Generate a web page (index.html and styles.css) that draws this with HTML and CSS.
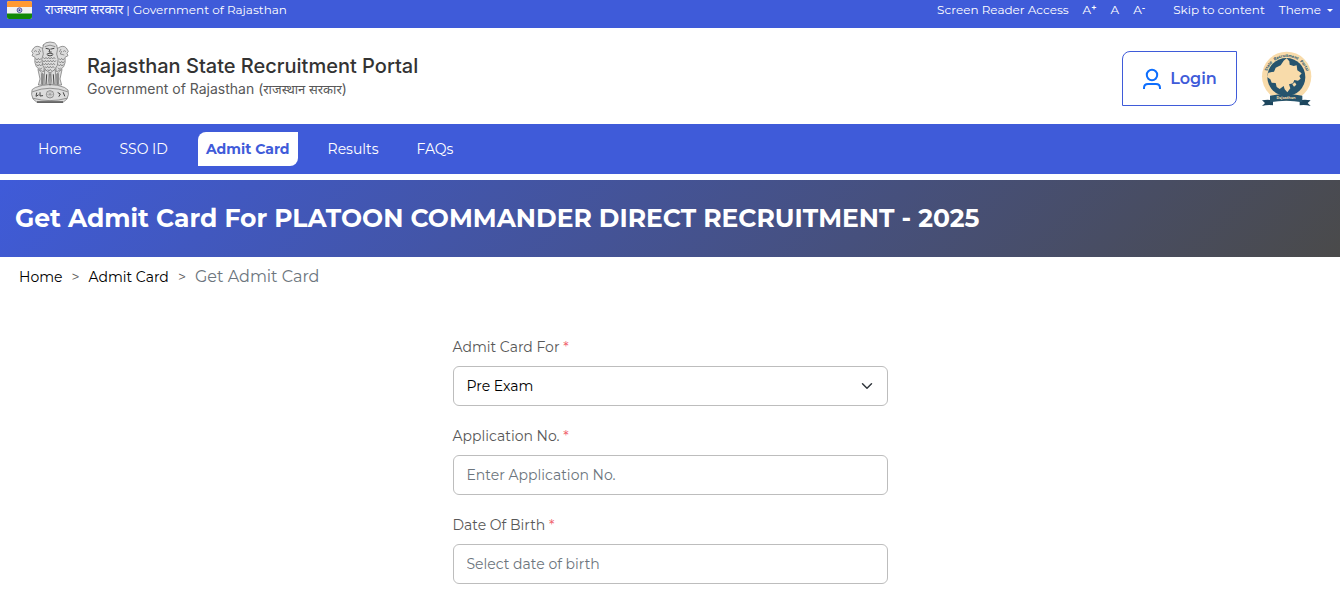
FILE: index.html
```html
<!DOCTYPE html>
<html lang="en">
    <head>
        <meta charset="utf-8">
        <meta name="viewport" content="width=device-width, initial-scale=1">
        <title>Rajasthan State Recruitment Portal</title>
        <link rel="stylesheet" href="styles.css">
    </head>
    <body>

        <!-- Top bar -->
        <div class="topbar">
            <div class="topbar-gov">
                <svg class="flag" viewBox="0 0 25 18" aria-hidden="true">
                    <rect width="25" height="18" rx="2" fill="#f2f2f2"/>
                    <path d="M0 6V2q0-2 2-2h21q2 0 2 2v4z" fill="#ff9933"/>
                    <path d="M0 12.500v3.500q0 2 2 2h21q2 0 2-2v-3.500z" fill="#138808"/>
                    <circle cx="12.500" cy="9.200" r="2.400" fill="#c5c5e4" stroke="#35358f" stroke-width=".8"/>
                    <circle cx="12.500" cy="9.200" r=".9" fill="#35358f"/>
                </svg>
                <span><span class="hindi" lang="hi">राजस्थान सरकार</span> | Government of Rajasthan</span>
            </div>
            <div class="topbar-tools">
                <a href="#reader">Screen Reader Access</a>
                <div class="font-size">
                    <button type="button">A<sup>+</sup></button>
                    <button type="button">A</button>
                    <button type="button">A<sup>-</sup></button>
                </div>
                <a href="#content">Skip to content</a>
                <button type="button" class="theme">Theme <span class="caret"></span></button>
            </div>
        </div>

        <!-- Header -->
        <header class="header">
            <a class="brand" href="#home">
                <svg class="emblem" viewBox="27 18 126 189" aria-hidden="true">
                    <g fill="#dcdcdc" stroke="#6a6a6a" stroke-width="2" stroke-linejoin="round" stroke-linecap="round">
                        <!-- legs -->
                        <path d="M54 104l6 28-5 18h14l2-32zM126 104l-6 28 5 18h-14l-2-32z"/>
                        <path d="M74 105l-2 47h12l4-42zM106 105l2 47H96l-4-42z"/>
                        <!-- side lions -->
                        <path d="M64 38q-14-9-23 1l-6 10 4 6-3 7 9 5q-3 16 4 28 9 11 22 16l9-66z"/>
                        <path d="M116 38q14-9 23 1l6 10-4 6 3 7-9 5q3 16-4 28-9 11-22 16l-9-66z"/>
                        <!-- front lion -->
                        <path d="M70 30q4-9 20-9t20 9q5 13 0 27 8 14 2 34-7 16-22 23-15-7-22-23-6-20 2-34-5-14 0-27z"/>
                        <!-- base -->
                        <path d="M47 157q43-17 86 0l11 8q4 13-3 27l-12 10H51l-12-10q-7-14-3-27z"/>
                        <path d="M38 170q52-21 104 0M40 190q50 14 100 0" fill="none"/>
                    </g>
                    <g class="mane">
                        <path d="M70 67l4 5 4-5 4 5 4-5 4 5 4-5 4 5 4-5 4 5M68 76l4 5 4-5 4 5 4-5 4 5 4-5 4 5 4-5 4 5 4-5M69 85l4 5 4-5 4 5 4-5 4 5 4-5 4 5 4-5 4 5M75 94l4 5 4-5 4 5 4-5 4 5 4-5 4 5M83 103l4 5 4-5 4 5"/>
                        <path d="M47 70l4 5 4-5 4 5 4-5M47 79l4 5 4-5 4 5 4-5M50 88l4 5 4-5 4 5 4-5M58 98l4 5 4-5M133 70l-4 5-4-5-4 5-4-5M133 79l-4 5-4-5-4 5-4-5M130 88l-4 5-4-5-4 5-4-5M122 98l-4 5-4-5"/>
                        <path d="M42 50q5-6 9 0M47 60l12-3-4-9M138 50q-5-6-9 0M133 60l-12-3 4-9M74 35q16-9 32 0M57 42l5 9M123 42l-5 9"/>
                    </g>
                    <g fill="none" stroke="#444" stroke-width="3" stroke-linecap="round">
                        <path d="M78 40l8 2M102 40l-8 2M90 42l-3 9h7M81 57q9-6 18 0M83 61q7 4 14 0"/>
                        <path d="M66 116v31M80 119l-2 28M100 119l2 28M114 116v31M90 117v33"/>
                        <path d="M50 174l-2 10 7-4M60 173v10l8-1M114 173l7 4-4 7M130 173l4 10"/>
                    </g>
                    <circle cx="90" cy="178" r="11" fill="#e4e4e4" stroke="#666" stroke-width="2"/>
                    <path d="M90 167v22M79 178h22M82 170l16 16M98 170l-16 16" stroke="#999" stroke-width="2"/>
                    <path d="M51 201h78" stroke="#444" stroke-width="4"/>
                </svg>
                <span class="brand-text">
                    <span class="brand-name">Rajasthan State Recruitment Portal</span>
                    <span class="brand-sub">Government of Rajasthan (<span class="hindi" lang="hi">राजस्थान सरकार</span>)</span>
                </span>
            </a>
            <div class="header-side">
                <button type="button" class="login">
                    <svg class="user-icon" viewBox="0 0 20 22" aria-hidden="true">
                        <circle cx="10" cy="7" r="5.200"/>
                        <path d="M2 21v-1q0-4 4-4h8q4 0 4 4v1"/>
                    </svg>
                    Login
                </button>
                <svg class="portal-logo" viewBox="33 33 153 168" aria-hidden="true">
                    <defs>
                        <path id="logo-arc" d="M49 124A62 62 0 1 1 171 124"/>
                    </defs>
                    <circle cx="110" cy="109" r="74" fill="#f8dbaa"/>
                    <circle cx="109" cy="111" r="57" fill="#26546d"/>
                    <path d="M110 55l8 9 1 10 12 4 9-2 2 15 13 9-7 8 4 8-8 6-11-2-4 10-12 3 4 12-9 12-8-9-3-10-12 9-9-6-3-12-12-1-4-10-10-7 4-13 17-3 5-12 15-7 9-14z" fill="#f8dbaa"/>
                    <path d="M127 133l8-6 4 7-7 6z" fill="#f8dbaa"/>
                    <text class="logo-text" text-anchor="middle"><textPath href="#logo-arc" startOffset="50%">State &#160; Recruitment &#160; Portal</textPath></text>
                    <path d="M36 181q18-3 33 0v15q-17-2-33 2l9-9zM182 181q-18-3-33 0v15q17-2 33 2l-9-9z" fill="#1d465d"/>
                    <path d="M60 167q48-10 97 0v20q-48-10-97 0z" fill="#26546d"/>
                    <text class="logo-ribbon" x="108" y="176" text-anchor="middle">Rajasthan</text>
                </svg>
            </div>
        </header>

        <!-- Navigation -->
        <nav class="nav">
            <a href="#home">Home</a>
            <a href="#sso">SSO ID</a>
            <a href="#admit-card" class="active">Admit Card</a>
            <a href="#results">Results</a>
            <a href="#faqs">FAQs</a>
        </nav>

        <main id="content">
            <div class="banner">
                <h1>Get Admit Card For PLATOON COMMANDER DIRECT RECRUITMENT - 2025</h1>
            </div>

            <div class="breadcrumb">
                <a href="#home">Home</a>
                <span class="sep">&gt;</span>
                <a href="#admit-card">Admit Card</a>
                <span class="sep">&gt;</span>
                <span class="current">Get Admit Card</span>
            </div>

            <form class="form">
                <div class="field">
                    <label for="exam">Admit Card For <span class="required">*</span></label>
                    <select id="exam">
                        <option>Pre Exam</option>
                    </select>
                </div>
                <div class="field">
                    <label for="application">Application No. <span class="required">*</span></label>
                    <input type="text" id="application" placeholder="Enter Application No.">
                </div>
                <div class="field">
                    <label for="dob">Date Of Birth <span class="required">*</span></label>
                    <input type="text" id="dob" placeholder="Select date of birth">
                </div>
            </form>
        </main>

    </body>
</html>
```
FILE: styles.css
```css
* {
    box-sizing: border-box;
}

body {
    margin: 0;
    background: #fff;
    color: #585858;
    font-family: Montserrat, Inter, "Noto Sans", sans-serif;
    font-size: 14px;
    line-height: 20px;
}

a {
    color: inherit;
    text-decoration: none;
}

button,
input,
select {
    font: inherit;
}

.hindi {
    font-size: 13px;
    line-height: 1;
}

/* Top bar */

.topbar {
    display: flex;
    justify-content: space-between;
    min-height: 28px;
    padding: 0 7px 8px;
    background: #3f5bd9;
    color: #fff;
    font-size: 12px;
}

.topbar-gov,
.topbar-tools,
.font-size {
    display: flex;
    align-items: center;
}

.topbar-gov {
    gap: 13px;
}

.topbar-tools {
    gap: 14px;
}

.flag {
    width: 25px;
    height: 18px;
}

.font-size {
    gap: 14px;
    margin-right: 14px;
}

.topbar button {
    padding: 0;
    border: 0;
    background: none;
    color: inherit;
}

.topbar sup {
    font-size: 9px;
    font-weight: 600;
    line-height: 0;
    vertical-align: 3px;
}

.topbar .theme {
    display: flex;
    align-items: center;
    gap: 6px;
}

.caret {
    border-top: 3px solid #fff;
    border-left: 3px solid transparent;
    border-right: 3px solid transparent;
}

/* Header */

.header {
    display: flex;
    justify-content: space-between;
    align-items: center;
    min-height: 96px;
    padding: 8px 28px 8px 29px;
}

.brand {
    display: flex;
    align-items: center;
    gap: 16px;
}

.emblem {
    width: 42px;
    height: 63px;
    margin-bottom: 8px;
}

.mane {
    fill: none;
    stroke: #6a6a6a;
    stroke-width: 2;
}

.brand-text {
    display: flex;
    flex-direction: column;
    font-family: Inter, "Noto Sans", sans-serif;
}

.brand-name {
    color: #333;
    font-size: 20px;
    font-weight: 500;
    line-height: 26px;
}

.brand-sub {
    font-size: 14px;
}

.header-side {
    display: flex;
    align-items: center;
    gap: 24px;
    padding-top: 5px;
}

.login {
    display: flex;
    justify-content: center;
    align-items: center;
    gap: 8px;
    min-width: 115px;
    padding: 15px 19px;
    border: 1px solid #3f5bd9;
    border-radius: 8px 0;
    background: #fff;
    color: #3f5bd9;
    font-size: 16px;
    font-weight: 600;
    line-height: 23px;
}

.user-icon {
    width: 20px;
    height: 22px;
    fill: none;
    stroke: #0d6efd;
    stroke-width: 2;
}

.portal-logo {
    width: 51px;
    height: 56px;
}

.logo-text {
    fill: #26546d;
    font-family: Inter, sans-serif;
    font-size: 12px;
    font-weight: 700;
}

.logo-ribbon {
    fill: #f8dbaa;
    font-size: 11px;
    font-weight: 700;
}

/* Navigation */

.nav {
    display: flex;
    gap: 22px;
    padding: 8px 30px;
    background: #3f5bd9;
    color: #fff;
}

.nav a {
    padding: 7px 8px;
}

.nav .active {
    border-radius: 8px 0;
    background: #fff;
    color: #3f5bd9;
    font-weight: 700;
}

/* Page title */

.banner {
    margin-top: 6px;
    padding: 22px 15px 23px;
    background: linear-gradient(135deg, #3f5bd9, #4a4a4a);
    color: #fff;
}

.banner h1 {
    margin: 0;
    font-size: 25px;
    font-weight: 700;
    line-height: 32px;
}

.breadcrumb {
    display: flex;
    align-items: center;
    gap: 9px;
    padding: 8px 19px;
    line-height: 24px;
}

.breadcrumb a {
    color: #000;
}

.breadcrumb .current {
    color: #6c757d;
    font-size: 16px;
}

/* Form */

.form {
    display: flex;
    flex-direction: column;
    gap: 20px;
    max-width: 435px;
    margin: 0 auto;
    padding: 40px 0 5px;
}

.field {
    display: flex;
    flex-direction: column;
    gap: 9px;
}

.required {
    color: #f0616d;
}

.field input,
.field select {
    width: 100%;
    height: 40px;
    padding: 0 13px;
    border: 1px solid #bdbdbd;
    border-radius: 6px;
    background-color: #fff;
    color: #000;
}

.field input::placeholder {
    color: #6c757d;
    opacity: 1;
}

.field select {
    appearance: none;
    background-image: url("data:image/svg+xml,%3csvg xmlns='http://www.w3.org/2000/svg' viewBox='0 0 16 16'%3e%3cpath fill='none' stroke='%23343a40' stroke-linecap='round' stroke-linejoin='round' stroke-width='2' d='m2 5 6 6 6-6'/%3e%3c/svg%3e");
    background-repeat: no-repeat;
    background-position: right 14px center;
    background-size: 12px;
}
```
